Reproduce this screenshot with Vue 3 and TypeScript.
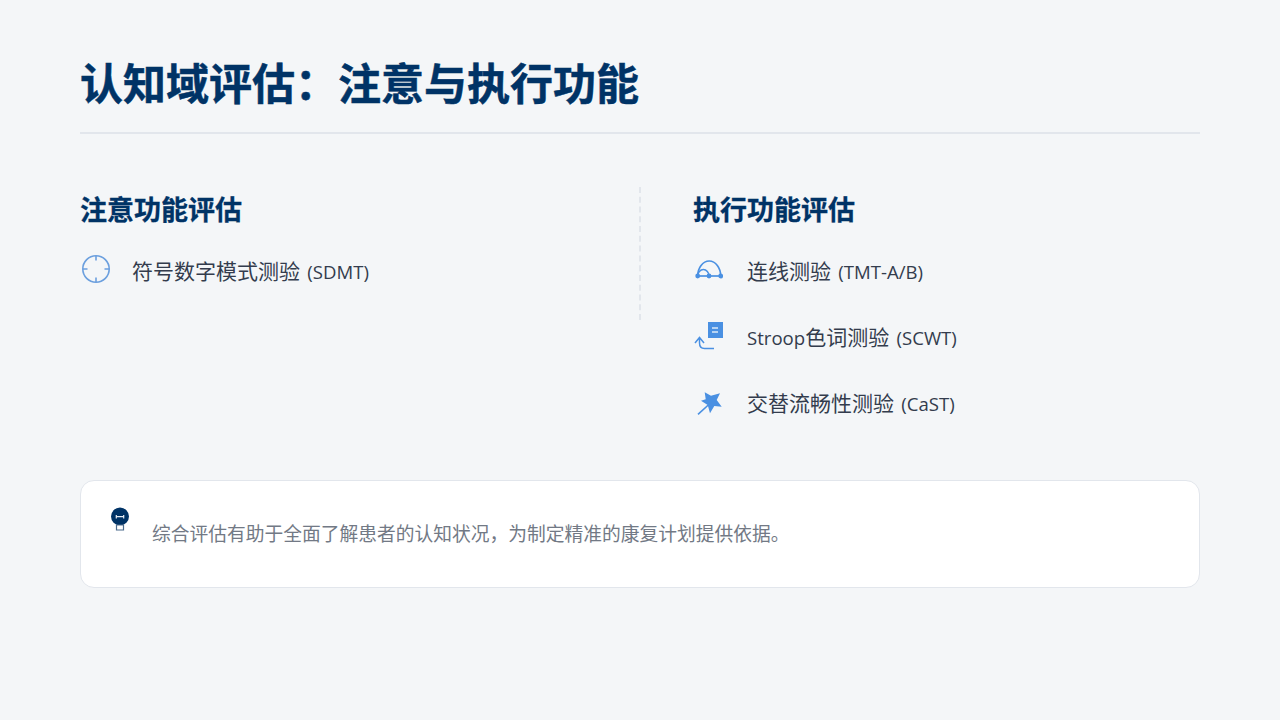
<script setup lang="ts">
interface Item { label: string; icon: string }
const title = '认知域评估\uFF1A注意与执行功能'
const noteText = '综合评估有助于全面了解患者的认知状况\uFF0C为制定精准的康复计划提供依据。'
const leftItems: Item[] = [{ label: '符号数字模式测验 (SDMT)', icon: 'target' }]
const rightItems: Item[] = [
  { label: '连线测验 (TMT-A/B)', icon: 'route' },
  { label: 'Stroop色词测验 (SCWT)', icon: 'doc' },
  { label: '交替流畅性测验 (CaST)', icon: 'wand' }
]
const groups = [
  { title: '注意功能评估', items: leftItems, cls: 'left' },
  { title: '执行功能评估', items: rightItems, cls: 'right' }
]
const parts = (s: string) => s.split(/([\u4e00-\u9fff]+)/).filter(Boolean).map(t => ({ t, cjk: /[\u4e00-\u9fff]/.test(t) }))
</script>

<template>
  <div class="slide">
    <header class="head">
      <h1>{{ title }}</h1>
    </header>
    <section class="cols">
      <div v-for="g in groups" :key="g.title" class="col" :class="g.cls">
        <h2>{{ g.title }}</h2>
        <ul>
          <li v-for="it in g.items" :key="it.label">
            <span class="ico">
              <svg v-if="it.icon === 'target'" width="30" height="30" viewBox="0 0 30 30" fill="none" stroke="#6b9fde" stroke-width="1.6">
                <circle cx="16" cy="15" r="13.2" />
                <path d="M16 2v4.500M16 23.500v4.500M3 15h4.500M24.500 15h4.500" />
              </svg>
              <svg v-else-if="it.icon === 'route'" width="30" height="30" viewBox="0 0 30 30" fill="none" stroke="#4a90e2" stroke-width="1.7">
                <path d="M4.700 22h23" />
                <path d="M4.700 22A5.650 6.500 0 0 1 16 22" stroke-width="1.500" />
                <path d="M4.700 22A11.500 15 0 0 1 27.700 22" />
                <circle cx="4.700" cy="22" r="2.400" fill="#4a90e2" stroke="none" />
                <circle cx="16" cy="22" r="2.400" fill="#4a90e2" stroke="none" />
                <circle cx="27.700" cy="22" r="2.400" fill="#4a90e2" stroke="none" />
              </svg>
              <svg v-else-if="it.icon === 'doc'" width="30" height="30" viewBox="0 0 30 30" fill="none">
                <rect x="15" y="2" width="15" height="16" fill="#4a90e2" />
                <path d="M19 8h6M19 12h6" stroke="#dce9f8" stroke-width="1.600" />
                <path d="M2 23l4.500-5.500L11 23M6.500 18v5c0 4 2 5.500 5 5.500h9.500" stroke="#4a90e2" stroke-width="1.500" />
              </svg>
              <svg v-else width="30" height="30" viewBox="0 0 30 30">
                <path d="M5 28.300L15.300 19" stroke="#4a90e2" stroke-width="1.600" />
                <path d="M11.700 6.300L18 9.700 27 7.300 23.700 14 28.700 20.700 21.300 20 17 27.300 14.700 19 8 14.700 12.700 13.300z" fill="#4a90e2" />
              </svg>
            </span>
            <span class="label">
              <span v-for="(p, i) in parts(it.label)" :key="i" :class="{ cjk: p.cjk }">{{ p.t }}</span>
            </span>
          </li>
        </ul>
      </div>
    </section>
    <aside class="note">
      <svg class="bulb" width="20" height="24" viewBox="0 0 20 24">
        <circle cx="10" cy="9.500" r="9" fill="#003366" />
        <path d="M6.300 8v3.500M6.300 9.700h7.400M13.700 8v3.500" stroke="#e6edf5" stroke-width="1.200" fill="none" />
        <path d="M6.500 18h7v5h-7z" fill="#fff" stroke="#4a6a8c" stroke-width="1.200" />
      </svg>
      <p>{{ noteText }}</p>
    </aside>
  </div>
</template>

<style>
html, body { margin: 0; background: #f4f6f8; }
</style>

<style scoped>
.slide {
  width: 1280px;
  height: 720px;
  box-sizing: border-box;
  padding: 48px 80px 0;
  background: #f4f6f8;
  font-family: "Open Sans", "Noto Sans CJK SC", sans-serif;
  overflow: hidden;
}
.head {
  height: 86px;
  box-sizing: border-box;
  border-bottom: 2px solid #e2e6ec;
}
h1 {
  margin: 0;
  font-size: 43px;
  line-height: 72px;
  font-weight: 700;
  color: #003366;
  -webkit-text-stroke: 0.5px #003366;
}
.cols {
  display: flex;
  align-items: flex-start;
  margin-top: 53px;
}
.col { box-sizing: border-box; }
.left {
  width: 561px;
  height: 133px;
  border-right: 2px dashed #e2e6ec;
}
.right { margin-left: 52px; }
h2 {
  margin: 0;
  font-size: 27px;
  line-height: 46px;
  font-weight: 700;
  color: #003366;
  -webkit-text-stroke: 0.3px #003366;
}
ul { list-style: none; margin: 4px 0 0; padding: 0; }
li {
  display: flex;
  align-items: center;
  height: 66px;
}
.ico {
  display: flex;
  width: 52px;
  flex: none;
  margin-top: -2px;
}
.right .ico { width: 54px; }
.label {
  font-size: 18.6px;
  word-spacing: 2.500px;
  color: #333c4d;
}
.cjk { font-size: 21px; }
.note {
  display: flex;
  align-items: flex-start;
  box-sizing: border-box;
  height: 108px;
  margin-top: 45px;
  padding: 26px 29px;
  background: #fff;
  border: 1px solid #e2e6ec;
  border-radius: 14px;
}
.note p {
  margin: 0 0 0 22px;
  padding-top: 10px;
  font-size: 18.75px;
  line-height: 34px;
  color: #727985;
}
.bulb { flex: none; }
</style>
